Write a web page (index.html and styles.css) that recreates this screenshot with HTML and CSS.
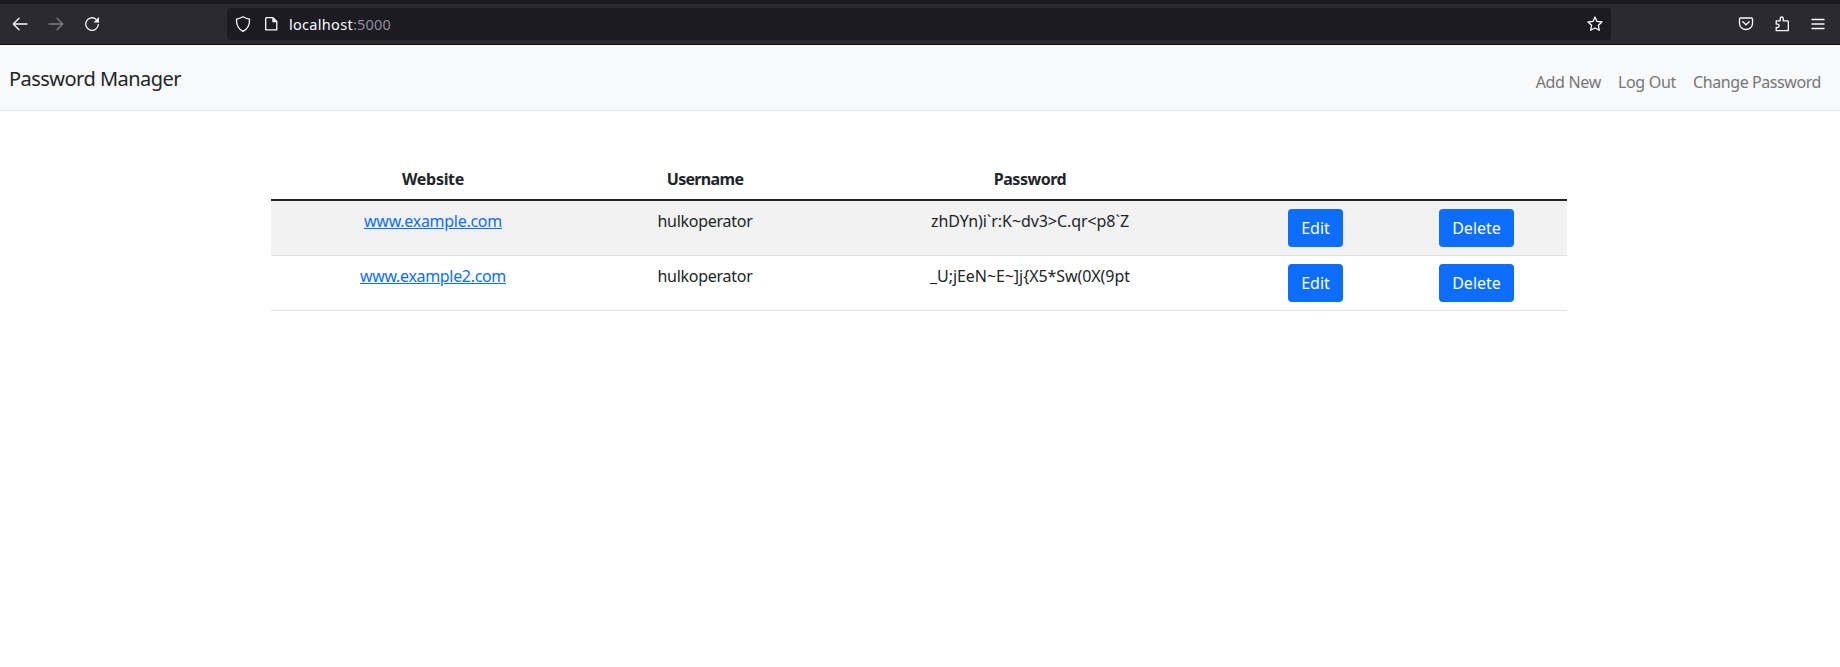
FILE: index.html
```html
<!DOCTYPE html>
<html lang="en">
<head>
<meta charset="utf-8">
<title>Password Manager</title>
<link rel="stylesheet" href="styles.css">
</head>
<body>
<header class="toolbar">
  <div class="controls">
    <svg class="icon" viewBox="0 0 16 16"><path d="M15 8H1.500M7 2.200 1.300 8 7 13.800"/></svg>
    <svg class="icon icon-disabled" viewBox="0 0 16 16"><path d="M1 8h13.500M9 2.200 14.700 8 9 13.800"/></svg>
    <svg class="icon" viewBox="0 0 16 16"><path d="M14.300 8.500A6.300 6.300 0 1 1 12 3.200"/><path class="fill" d="M15 1v5.500H9.500z"/></svg>
  </div>
  <div class="address">
    <svg class="icon" viewBox="0 0 16 16"><path d="M8 .8C6 2 4 2.800 1.500 3.200 1.300 8.500 3 13 8 15.300c5-2.300 6.700-6.800 6.500-12.100C12 2.800 10 2 8 .8z"/></svg>
    <svg class="icon page" viewBox="0 0 16 16"><path d="M3.500 1.700H10l3.800 3.800v8.300H2.700V2.500q0-.8.800-.8z"/><path class="fill" d="M9.300 1.500v4.700h4.700z"/></svg>
    <span class="url"><span class="host">localhost</span><span class="port">:5000</span></span>
    <svg class="icon star" viewBox="0 0 16 16"><path d="m8 1 2 4.400 5 .6-3.600 3.300.9 5L8 12l-4.300 2.300.9-5L1 6l5-.6z"/></svg>
  </div>
  <div class="extras">
    <svg class="icon" viewBox="0 0 16 16"><path d="M2.500 2h11q1 0 1 1v4.500a6.500 6 0 0 1-13 0V3q0-1 1-1z"/><path d="m4.800 5.800 3.200 3 3.200-3"/></svg>
    <svg class="icon" viewBox="0 0 16 16"><path d="M2.200 4.800h4V2.500a1.500 1.500 0 0 1 3 0v2.300h4.300q.8 0 .8.800v9.100H2.200v-3.200h1.300a1.600 1.600 0 0 0 0-3.300H2.200z"/></svg>
    <svg class="icon" viewBox="0 0 16 16"><path d="M2 3.500h12M2 8h12M2 12.500h12"/></svg>
  </div>
</header>
<nav class="navbar">
  <a class="brand">Password Manager</a>
  <div class="links"><a class="add">Add New</a><a class="logout">Log Out</a><a class="change">Change Password</a></div>
</nav>
<main class="content">
  <table class="table">
    <colgroup><col class="c-site"><col class="c-user"><col class="c-pass"><col class="c-edit"><col class="c-delete"></colgroup>
    <thead><tr><th><span class="h-site">Website</span></th><th><span class="h-user">Username</span></th><th><span class="h-pass">Password</span></th><th></th><th></th></tr></thead>
    <tbody>
      <tr class="striped"><td><a class="site-a">www.example.com</a></td><td><span class="user">hulkoperator</span></td><td><span class="pass">zhDYn)i`r:K~dv3&gt;C.qr&lt;p8`Z</span></td><td><button class="btn edit">Edit</button></td><td><button class="btn delete">Delete</button></td></tr>
      <tr><td><a class="site-b">www.example2.com</a></td><td><span class="user">hulkoperator</span></td><td><span class="pass">_U;jEeN~E~]j{X5*Sw(0X(9pt</span></td><td><button class="btn edit">Edit</button></td><td><button class="btn delete">Delete</button></td></tr>
    </tbody>
  </table>
</main>
</body>
</html>
```
FILE: styles.css
```css
*{box-sizing:border-box}
body{margin:0;background:#fff;color:#212529;font:16px/24px "Noto Sans",sans-serif}
.toolbar{height:45px;display:flex;align-items:center;background:#2b2a33;border-top:4px solid #1c1b22;border-bottom:1px solid #0c0c0d;padding:0 14px 0 12px}
.icon{width:16px;height:16px;flex:none;fill:none;stroke:#fbfbfe;stroke-width:1.3;stroke-linecap:round;stroke-linejoin:round}
.icon .fill{fill:#fbfbfe;stroke:none}
.icon-disabled{opacity:.4}
.controls{display:flex;gap:20px;width:215px}
.address{width:1384px;height:32px;border-radius:4px;background:#1c1b22;display:flex;align-items:center;padding:0 8px}
.page{margin-left:12px}
.url{margin-left:10px;font-size:14.5px;line-height:20px;color:#fbfbfe}
.host{letter-spacing:.3px}
.port{color:#8f8f9d;letter-spacing:.2px}
.star{margin-left:auto}
.extras{display:flex;gap:20px;margin-left:auto}
.navbar{height:66px;background:#f8f9fa;border-bottom:1px solid #dee2e6;display:flex;justify-content:space-between;padding:18px 19px 0 9px}
.brand{font-size:20px;line-height:32px;letter-spacing:-.53px}
.links{display:flex;gap:17px;padding-top:7px;color:#757678}
.add{letter-spacing:-.33px}
.logout{letter-spacing:-.3px}
.change{letter-spacing:-.42px}
.content{padding:48px 0 0 271px}
.table{width:1296px;table-layout:fixed;border-collapse:separate;border-spacing:0;text-align:center}
.c-site{width:324px}.c-user{width:220px}.c-pass{width:430px}.c-edit{width:141px}.c-delete{width:181px}
th{height:42px;padding:8px;border-bottom:2px solid #212529;vertical-align:top}
td{height:55px;padding:8px 0;border-bottom:1px solid #dee2e6;vertical-align:top}
td a{color:#0d6efd;text-decoration:underline}
.h-site{letter-spacing:-.3px}
.h-user{letter-spacing:-.68px}
.h-pass{letter-spacing:-.48px}
.site-a{letter-spacing:-.28px}
.site-b{letter-spacing:-.33px}
.user{letter-spacing:-.28px}
.pass{letter-spacing:-.07px}
.striped td{background:#f2f2f2}
.btn{display:inline-flex;align-items:center;justify-content:center;height:38px;padding:0;border:0;border-radius:4px;background:#0d6efd;color:#fff;font:inherit}
.edit{width:55px}.delete{width:75px}
```
